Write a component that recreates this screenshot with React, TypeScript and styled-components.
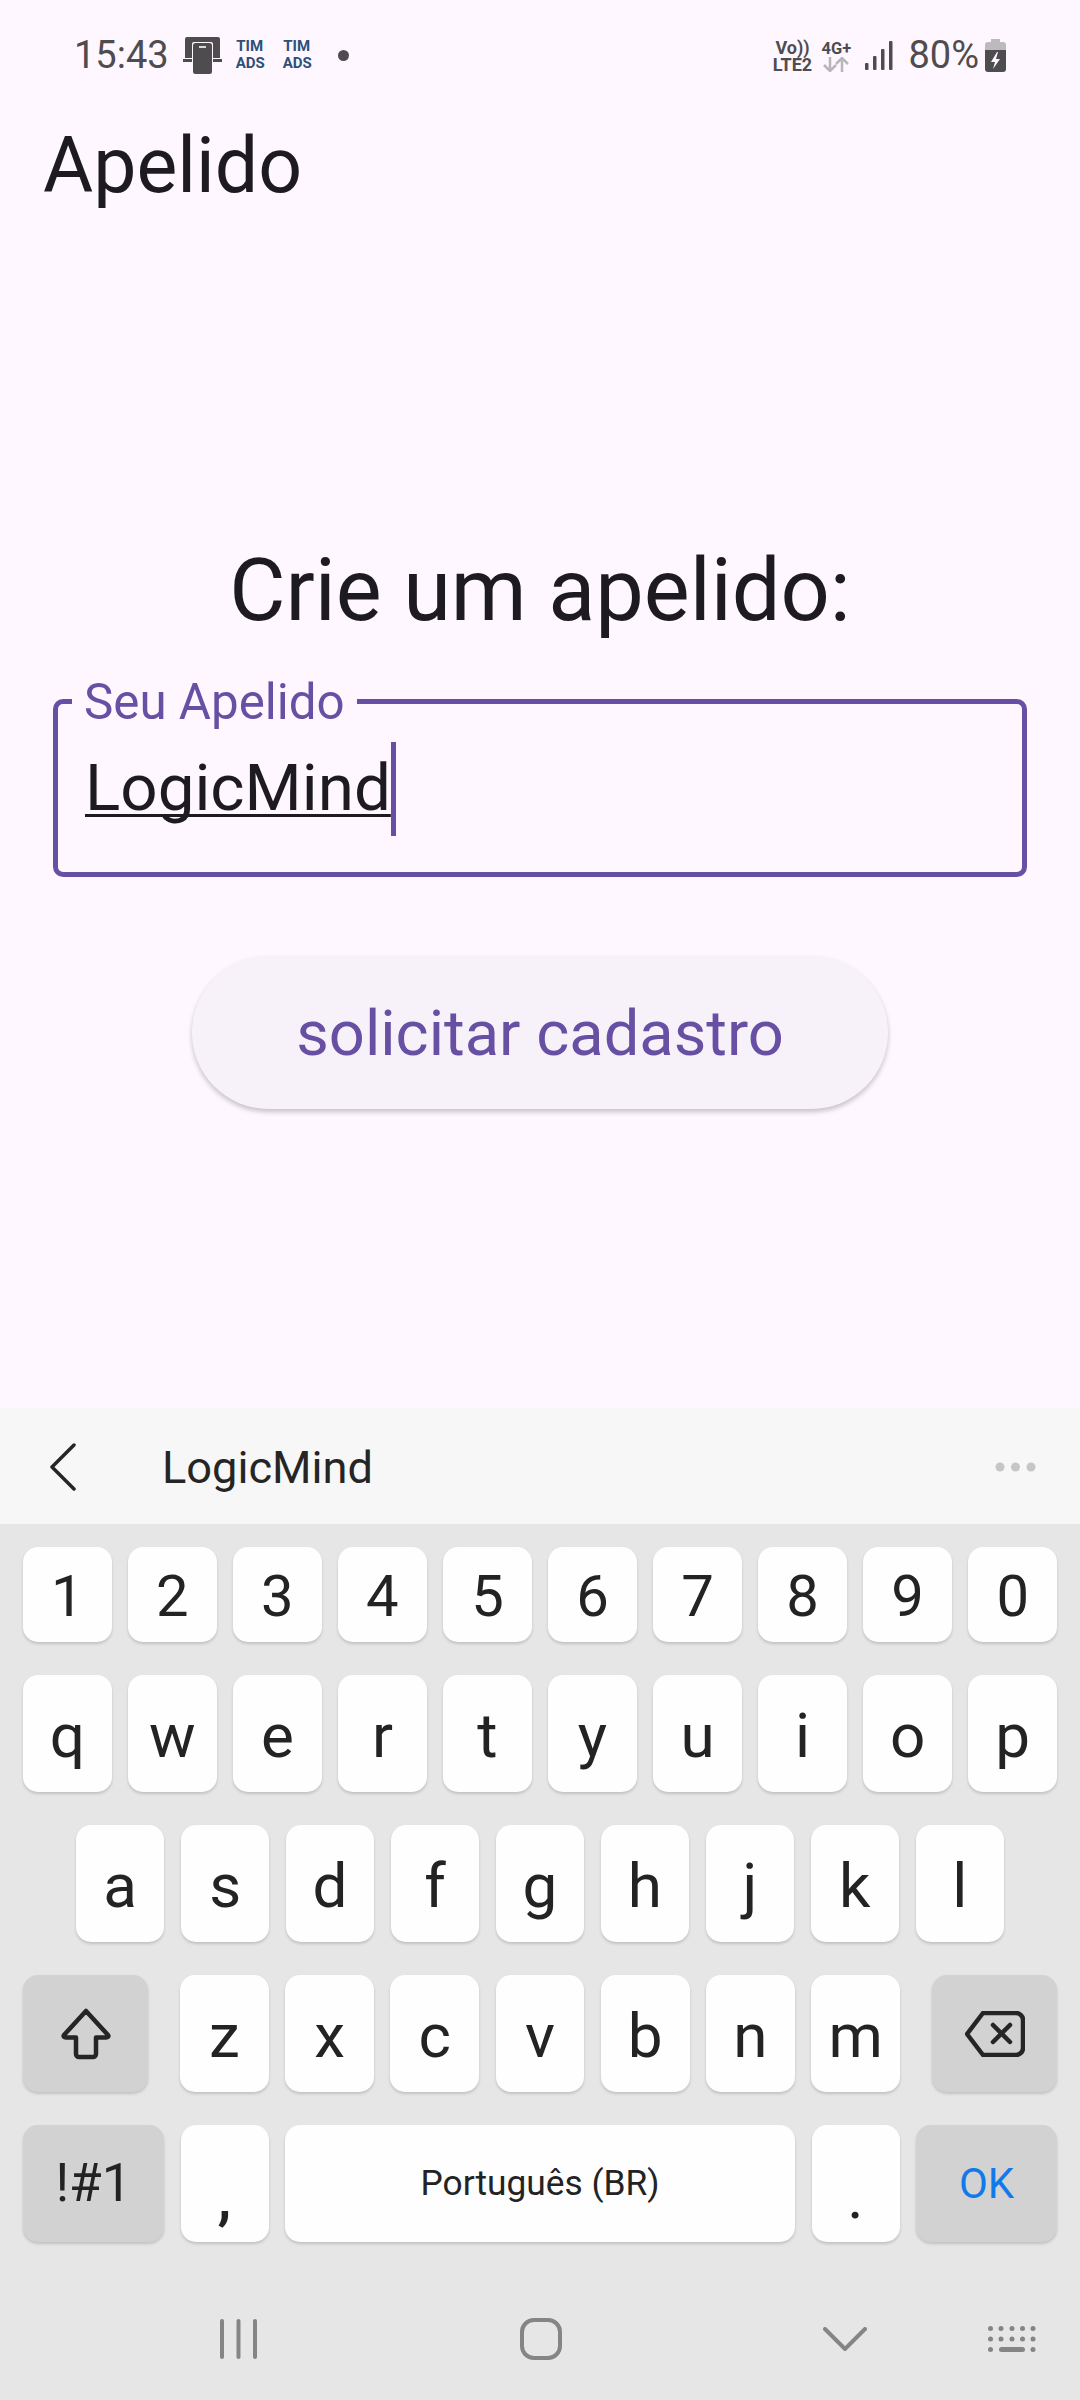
import { createGlobalStyle, styled } from "styled-components";

const GlobalStyle = createGlobalStyle`
  html, body {
    margin: 0;
    padding: 0;
    background: #fef7ff;
    font-family: Roboto, "Liberation Sans", sans-serif;
  }
`;

const Screen = styled.div`
  width: 1080px;
  height: 2400px;
  display: flex;
  flex-direction: column;
  overflow: hidden;
  background: #fef7ff;
  color: #1d1b20;
`;

const StatusBar = styled.div`
  height: 110px;
  flex: none;
  display: flex;
  padding: 36px 74px 0 74px;
  box-sizing: border-box;
  color: #4f4c50;
`;

const StatusGroup = styled.div`
  height: 38px;
  display: flex;
  align-items: center;
`;

const StatusSpacer = styled.div`
  flex: 1;
`;

const Clock = styled.span`
  font-size: 38px;
  line-height: 38px;
  margin-right: 14px;
`;

const Percent = styled.span`
  font-size: 38px;
  line-height: 38px;
  margin: 0 6px 0 15px;
`;

const TimAds = styled.span`
  width: 28px;
  margin-left: ${(p: { $left: number }) => p.$left}px;
  font-size: 15px;
  line-height: 17px;
  font-weight: 700;
  color: #2d5079;
  text-align: center;
`;

const Dot = styled.span`
  width: 11px;
  height: 11px;
  margin-left: 27px;
  border-radius: 50%;
  background: #4f4c50;
`;

const Volte = styled.span`
  width: 44px;
  margin-top: 2px;
  font-size: 18px;
  line-height: 17px;
  font-weight: 700;
  text-align: center;
`;

const NetStack = styled.div`
  width: 32px;
  margin: 2px 13px 0 6px;
  display: flex;
  flex-direction: column;
  align-items: center;
  font-size: 16.5px;
  line-height: 17px;
  font-weight: 700;
`;

const TopBar = styled.div`
  height: 80px;
  flex: none;
  padding-left: 43px;
  box-sizing: border-box;
  font-size: 77px;
  line-height: 112px;
`;

const Content = styled.div`
  flex: 1;
  display: flex;
  flex-direction: column;
  align-items: center;
`;

const Heading = styled.h1`
  margin: 351px 0 0;
  font-size: 86.5px;
  line-height: 100px;
  font-weight: 400;
`;

const Field = styled.div`
  position: relative;
  width: 974px;
  height: 178px;
  margin-top: 58px;
  box-sizing: border-box;
  padding: 46px 0 0 27px;
  border: 5px solid #6750a4;
  border-radius: 10px;
`;

const FieldLabel = styled.label`
  position: absolute;
  left: 14px;
  top: -28px;
  padding: 0 12px;
  background: #fef7ff;
  color: #6750a4;
  font-size: 49.3px;
  line-height: 52px;
`;

const FieldValue = styled.div`
  display: flex;
  font-size: 65.5px;
  line-height: 76px;
`;

const Typed = styled.span`
  text-decoration: underline;
  text-decoration-thickness: 3px;
  text-underline-offset: 4px;
  text-decoration-skip-ink: none;
`;

const Caret = styled.span`
  width: 5px;
  height: 94px;
  margin-top: -8px;
  background: #6750a4;
`;

const SubmitButton = styled.button`
  width: 696px;
  height: 153px;
  margin-top: 79px;
  padding: 0;
  border: 0;
  border-radius: 77px;
  background: #f7f2fa;
  color: #6750a4;
  font-family: Roboto, "Liberation Sans", sans-serif;
  font-size: 63.2px;
  box-shadow: 0 3px 5px rgba(0, 0, 0, 0.22);
`;

const Suggestions = styled.div`
  height: 116px;
  flex: none;
  display: flex;
  align-items: center;
  padding: 2px 44px 0 50px;
  box-sizing: border-box;
  background: #f7f7f7;
  color: #252525;
`;

const SuggestionWord = styled.span`
  flex: 1;
  margin-left: 86px;
  font-size: 45.2px;
`;

const Keyboard = styled.div`
  height: 876px;
  flex: none;
  box-sizing: border-box;
  padding: 23px 23px 0;
  display: flex;
  flex-direction: column;
  background: #e6e6e6;
`;

const KeyRow = styled.div<{ $height?: number; $inset?: number; $top?: number }>`
  height: ${(p) => p.$height ?? 117}px;
  margin-top: ${(p) => p.$top ?? 33}px;
  padding: 0 ${(p) => p.$inset ?? 0}px;
  display: flex;
  gap: 16.5px;
`;

const Key = styled.div<{
  $dark?: boolean;
  $width?: number;
  $size?: number;
  $color?: string;
  $drop?: number;
  $after?: number;
  $before?: number;
  $weight?: number;
}>`
  flex: ${(p) => (p.$width ? `0 0 ${p.$width}px` : "1 1 0")};
  margin-left: ${(p) => p.$before ?? 0}px;
  margin-right: ${(p) => p.$after ?? 0}px;
  box-sizing: border-box;
  padding-top: ${(p) => p.$drop ?? 0}px;
  display: flex;
  align-items: center;
  justify-content: center;
  border-radius: 15px;
  background: ${(p) => (p.$dark ? "#d2d2d2" : "#fefefe")};
  color: ${(p) => p.$color ?? "#232323"};
  font-size: ${(p) => p.$size ?? 62}px;
  font-weight: ${(p) => p.$weight ?? 400};
  line-height: 1;
  box-shadow: 0 2px 3px rgba(0, 0, 0, 0.16);
`;

const NavBar = styled.div`
  flex: 1;
  display: flex;
  align-items: center;
  padding: 36px 0 0 197px;
`;

const NavIcon = styled.svg<{ $left: number }>`
  margin-left: ${(p) => p.$left}px;
  flex: none;
`;

const digits = "1234567890".split("");
const topLetters = "qwertyuiop".split("");
const midLetters = "asdfghjkl".split("");
const lowLetters = "zxcvbnm".split("");
const keyDots = [2.5, 13, 24, 34.5, 45];

function CastIcon() {
  return (
    <svg width="39" height="38" viewBox="0 0 39 38">
      <path d="M4 1h31a2 2 0 0 1 2 2v19h-7V8a2 2 0 0 0-2-2H11a2 2 0 0 0-2 2v14H2V3a2 2 0 0 1 2-2Z" fill="#4f4c50" />
      <rect x="0" y="23" width="9" height="3" fill="#4f4c50" />
      <rect x="30" y="23" width="9" height="3" fill="#4f4c50" />
      <rect x="10" y="7" width="19" height="31" rx="2.5" fill="#4f4c50" />
      <rect x="16" y="10" width="7" height="2" fill="#d9d6da" />
    </svg>
  );
}

function SignalIcon() {
  return (
    <svg width="28" height="29" viewBox="0 0 28 29">
      <rect x="0" y="22" width="3.5" height="7" rx="1" fill="#4f4c50" />
      <rect x="8" y="15" width="3.5" height="14" rx="1" fill="#4f4c50" />
      <rect x="16" y="8" width="3.5" height="21" rx="1" fill="#4f4c50" />
      <rect x="24" y="0" width="3.5" height="29" rx="1" fill="#4f4c50" />
    </svg>
  );
}

function ArrowsIcon() {
  return (
    <svg width="28" height="15" viewBox="0 0 28 15" fill="none" stroke="#b9b6ba" strokeWidth="2.5">
      <path d="M8 0v13M2 8l6 6 6-6" />
      <path d="M20 15V2M14 7l6-6 6 6" />
    </svg>
  );
}

function BatteryIcon() {
  return (
    <svg width="21" height="33" viewBox="0 0 21 33">
      <path d="M6 0h9v3h3a3 3 0 0 1 3 3v8H0V6a3 3 0 0 1 3-3h3Z" fill="#bdbabe" />
      <path d="M0 11h21v19a3 3 0 0 1-3 3H3a3 3 0 0 1-3-3Z" fill="#4f4c50" />
      <path d="M12 13l-6 10h4l-2 7 7-10h-4l2-7Z" fill="#fef7ff" />
    </svg>
  );
}

export default function App() {
  return (
    <Screen>
      <GlobalStyle />
      <StatusBar>
        <StatusGroup>
          <Clock>15:43</Clock>
          <CastIcon />
          <TimAds $left={14}>TIM ADS</TimAds>
          <TimAds $left={19}>TIM ADS</TimAds>
          <Dot />
        </StatusGroup>
        <StatusSpacer />
        <StatusGroup>
          <Volte>Vo)) LTE2</Volte>
          <NetStack>
            4G+
            <ArrowsIcon />
          </NetStack>
          <SignalIcon />
          <Percent>80%</Percent>
          <BatteryIcon />
        </StatusGroup>
      </StatusBar>

      <TopBar>Apelido</TopBar>

      <Content>
        <Heading>Crie um apelido:</Heading>
        <Field>
          <FieldLabel>Seu Apelido</FieldLabel>
          <FieldValue>
            <Typed>LogicMind</Typed>
            <Caret />
          </FieldValue>
        </Field>
        <SubmitButton>solicitar cadastro</SubmitButton>
      </Content>

      <Suggestions>
        <svg width="26" height="48" viewBox="0 0 26 48" fill="none" stroke="#252525" strokeWidth="3.5" strokeLinecap="round" strokeLinejoin="round">
          <path d="M24 2 2 24l22 22" />
        </svg>
        <SuggestionWord>LogicMind</SuggestionWord>
        <svg width="41" height="10" viewBox="0 0 41 10" fill="#c6c6c6">
          <circle cx="5" cy="5" r="4.5" />
          <circle cx="20.5" cy="5" r="4.5" />
          <circle cx="36" cy="5" r="4.5" />
        </svg>
      </Suggestions>

      <Keyboard>
        <KeyRow $height={95} $top={0}>
          {digits.map((k) => (
            <Key key={k} $size={58} $drop={2}>{k}</Key>
          ))}
        </KeyRow>
        <KeyRow>
          {topLetters.map((k) => (
            <Key key={k} $drop={4}>{k}</Key>
          ))}
        </KeyRow>
        <KeyRow $inset={53}>
          {midLetters.map((k) => (
            <Key key={k} $drop={4}>{k}</Key>
          ))}
        </KeyRow>
        <KeyRow>
          <Key $dark $width={125} $after={15.5}>
            <svg width="50" height="52" viewBox="0 0 50 52" fill="none" stroke="#252525" strokeWidth="4.5" strokeLinejoin="round">
              <path d="M25 3 47 27c1 1.5 0 2.5-2 2.5H35V46a3 3 0 0 1-3 3H18a3 3 0 0 1-3-3V29.5H5c-2 0-3-1-2-2.5Z" />
            </svg>
          </Key>
          {lowLetters.map((k) => (
            <Key key={k} $drop={4}>{k}</Key>
          ))}
          <Key $dark $width={125} $before={15.5}>
            <svg width="60" height="46" viewBox="0 0 60 46" fill="none" stroke="#252525" strokeWidth="4.5" strokeLinejoin="round" strokeLinecap="round">
              <path d="M18 2h33a7 7 0 0 1 7 7v28a7 7 0 0 1-7 7H18L2 23Z" />
              <path d="M28 14l17 17M45 14 28 31" />
            </svg>
          </Key>
        </KeyRow>
        <KeyRow>
          <Key $dark $width={141} $size={53}>!#1</Key>
          <Key $width={88} $drop={26} $weight={500}>,</Key>
          <Key $size={35.3}>Português (BR)</Key>
          <Key $width={88} $drop={26}>.</Key>
          <Key $dark $width={141} $size={42} $color="#1279ea">OK</Key>
        </KeyRow>
        <NavBar>
          <NavIcon $left={0} width="38" height="40" viewBox="0 0 38 40" fill="#858585">
            <rect x="0" y="0" width="4" height="40" rx="2" />
            <rect x="16.5" y="0" width="4" height="40" rx="2" />
            <rect x="33" y="0" width="4" height="40" rx="2" />
          </NavIcon>
          <NavIcon $left={262} width="42" height="42" viewBox="0 0 42 42" fill="none" stroke="#858585" strokeWidth="4">
            <rect x="2" y="2" width="38" height="38" rx="12" />
          </NavIcon>
          <NavIcon $left={261} width="44" height="24" viewBox="0 0 44 24" fill="none" stroke="#858585" strokeWidth="4" strokeLinecap="round">
            <path d="M2 2 22 22 42 2" />
          </NavIcon>
          <NavIcon $left={121} width="48" height="26" viewBox="0 0 48 26" fill="#858585">
            {keyDots.map((x) => (
              <circle key={x} cx={x} cy="2.5" r="2.5" />
            ))}
            {keyDots.map((x) => (
              <circle key={x} cx={x} cy="13" r="2.5" />
            ))}
            <circle cx="2.5" cy="23.5" r="2.5" />
            <rect x="11" y="21" width="26" height="5" rx="2.5" />
            <circle cx="45" cy="23.5" r="2.5" />
          </NavIcon>
        </NavBar>
      </Keyboard>
    </Screen>
  );
}
